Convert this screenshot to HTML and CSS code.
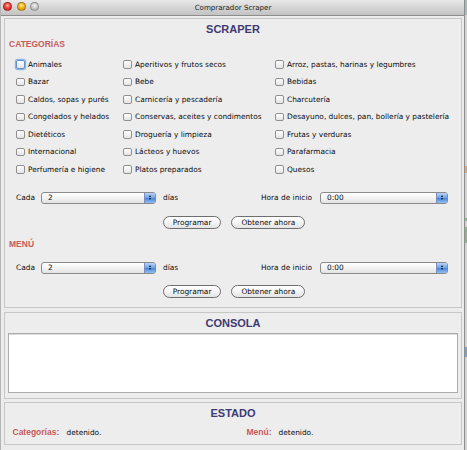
FILE: index.html
```html
<!DOCTYPE html>
<html lang="es">
<head>
<meta charset="utf-8">
<title>Comprarador Scraper</title>
<link rel="stylesheet" href="styles.css">
</head>
<body>
<div class="screen">
  <div class="window">
    <div class="titlebar">
      <div class="lights">
        <span class="light red"></span>
        <span class="light orange"></span>
        <span class="light grey"></span>
      </div>
      <div class="wtitle">Comprarador Scraper</div>
    </div>
    <div class="content">
      <section class="panel p-scraper">
        <h1 class="ptitle">SCRAPER</h1>
        <h2 class="sub">CATEGORÍAS</h2>
        <div class="cats">
          <label class="cb"><span class="box focus"></span>Animales</label>
          <label class="cb"><span class="box"></span>Aperitivos y frutos secos</label>
          <label class="cb"><span class="box"></span>Arroz, pastas, harinas y legumbres</label>
          <label class="cb"><span class="box"></span>Bazar</label>
          <label class="cb"><span class="box"></span>Bebe</label>
          <label class="cb"><span class="box"></span>Bebidas</label>
          <label class="cb"><span class="box"></span>Caldos, sopas y purés</label>
          <label class="cb"><span class="box"></span>Carnicería y pescadería</label>
          <label class="cb"><span class="box"></span>Charcutería</label>
          <label class="cb"><span class="box"></span>Congelados y helados</label>
          <label class="cb"><span class="box"></span>Conservas, aceites y condimentos</label>
          <label class="cb"><span class="box"></span>Desayuno, dulces, pan, bollería y pastelería</label>
          <label class="cb"><span class="box"></span>Dietéticos</label>
          <label class="cb"><span class="box"></span>Droguería y limpieza</label>
          <label class="cb"><span class="box"></span>Frutas y verduras</label>
          <label class="cb"><span class="box"></span>Internacional</label>
          <label class="cb"><span class="box"></span>Lácteos y huevos</label>
          <label class="cb"><span class="box"></span>Parafarmacia</label>
          <label class="cb"><span class="box"></span>Perfumería e higiene</label>
          <label class="cb"><span class="box"></span>Platos preparados</label>
          <label class="cb"><span class="box"></span>Quesos</label>
        </div>
        <div class="sched sched-cat">
          <span class="lbl-cada">Cada</span>
          <div class="select sel-days"><span class="val">2</span><span class="arrows"><i class="up"></i><i class="down"></i></span></div>
          <span class="lbl-dias">días</span>
          <span class="lbl-hora">Hora de inicio</span>
          <div class="select sel-hour"><span class="val">0:00</span><span class="arrows"><i class="up"></i><i class="down"></i></span></div>
        </div>
        <div class="btns btns-cat">
          <button class="btn">Programar</button>
          <button class="btn">Obtener ahora</button>
        </div>
        <h2 class="sub sub-menu">MENÚ</h2>
        <div class="sched sched-menu">
          <span class="lbl-cada">Cada</span>
          <div class="select sel-days"><span class="val">2</span><span class="arrows"><i class="up"></i><i class="down"></i></span></div>
          <span class="lbl-dias">días</span>
          <span class="lbl-hora">Hora de inicio</span>
          <div class="select sel-hour"><span class="val">0:00</span><span class="arrows"><i class="up"></i><i class="down"></i></span></div>
        </div>
        <div class="btns btns-menu">
          <button class="btn">Programar</button>
          <button class="btn">Obtener ahora</button>
        </div>
      </section>

      <section class="panel p-console">
        <h1 class="ptitle">CONSOLA</h1>
        <div class="console"></div>
      </section>

      <section class="panel p-state">
        <h1 class="ptitle">ESTADO</h1>
        <div class="status">
          <span class="slabel">Categorías:</span>
          <span class="sval">detenido.</span>
          <span class="slabel">Menú:</span>
          <span class="sval">detenido.</span>
        </div>
      </section>
    </div>
  </div>
  <div class="strip"></div>
</div>
</body>
</html>
```

FILE: styles.css
```css
* { box-sizing: border-box; }
html, body { margin: 0; padding: 0; }
body {
  width: 467px;
  height: 450px;
  overflow: hidden;
  background: #d9dcdc;
  font-family: "DejaVu Sans", "Liberation Sans", sans-serif;
  font-size: 7.4px;
  color: #0c0c0c;
}

.screen {
  display: flex;
  height: 450px;
}

.window {
  width: 465px;
  height: 450px;
  display: flex;
  flex-direction: column;
  background: #ececec;
  border-left: 1px solid #b4b4b4;
  border-right: 1px solid #8e8e8e;
}

.strip {
  flex: 1;
  background: linear-gradient(to bottom,
    #a9b8b8 0, #a9b8b8 15px,
    #d4d4d4 15px, #d4d4d4 166px,
    #e3a56c 166px, #e3a56c 173px,
    #d4d4d4 173px, #d4d4d4 218px,
    #8db48f 218px, #8db48f 221px,
    #d4d4d4 221px, #d4d4d4 227px,
    #8db48f 227px, #8db48f 243px,
    #d4d4d4 243px, #d4d4d4 347px,
    #7f9dcf 347px, #7f9dcf 357px,
    #d4d4d4 357px);
}

/* title bar */
.titlebar {
  position: relative;
  height: 16px;
  flex: none;
  display: flex;
  align-items: center;
  justify-content: center;
  background: linear-gradient(to bottom, #e9e9e9 0%, #d3d3d3 55%, #c2c2c2 100%);
  border-bottom: 1px solid #8d8d8d;
}
.lights {
  position: absolute;
  left: 2px;
  top: 2px;
  display: flex;
  gap: 4.5px;
}
.light {
  width: 9px;
  height: 9px;
  border-radius: 50%;
  border: 1px solid rgba(0,0,0,0.25);
}
.light.red { background: radial-gradient(circle at 50% 35%, #ffb3a8 0, #f0403a 45%, #b51616 100%); }
.light.orange { background: radial-gradient(circle at 50% 35%, #fff1a4 0, #f4b421 45%, #c2770c 100%); }
.light.grey { background: radial-gradient(circle at 50% 35%, #f2f2f2 0, #c9c9c9 50%, #a3a3a3 100%); }
.wtitle {
  font-size: 7.1px;
  color: #1a1a1a;
  padding-left: 1px;
}

/* content */
.content {
  flex: 1;
  display: flex;
  flex-direction: column;
  padding: 2px 2px 0 3px;
}

.panel {
  border: 1px solid #c6c6c6;
  background: #ededed;
  padding: 3px 3px 0;
}
.p-scraper { height: 290px; }
.p-console { height: 87px; margin-top: 4px; }
.p-state { height: 43px; margin-top: 3px; }

.ptitle {
  margin: 0;
  font-family: "Liberation Sans", Arial, sans-serif;
  font-weight: bold;
  font-size: 11px;
  line-height: 14px;
  color: #3e3a72;
  text-align: center;
}

.sub {
  margin: 3px 0 0 1px;
  font-family: "Liberation Sans", Arial, sans-serif;
  font-weight: bold;
  font-size: 8.5px;
  line-height: 10px;
  color: #c95b5c;
}
.sub-menu { margin-top: 10px; }

/* checkboxes */
.cats {
  margin-top: 6.5px;
  padding-left: 8px;
  display: grid;
  grid-template-columns: 107px 152px 1fr;
  grid-auto-rows: 17.5px;
}
.cb {
  display: flex;
  align-items: center;
  white-space: nowrap;
}
.box {
  flex: none;
  width: 8.5px;
  height: 8.5px;
  margin-right: 3.5px;
  border: 1px solid #8f8f8f;
  border-radius: 2px;
  background: linear-gradient(to bottom, #ffffff, #e4e4e4);
}
.box.focus {
  border-color: #5f8fd0;
  box-shadow: 0 0 0 1.2px #8fb4e6;
}

/* schedule rows */
.sched {
  display: flex;
  align-items: center;
  height: 14px;
  padding-left: 8px;
}
.sched-cat { margin-top: 12.5px; }
.sched-menu { margin-top: 12px; }
.lbl-cada { width: 25px; }
.lbl-dias { width: 98px; margin-left: 7px; }
.lbl-hora { width: 59px; }

.select {
  position: relative;
  height: 12px;
  display: flex;
  align-items: center;
  border: 1px solid #8a8a8a;
  border-radius: 3px;
  background: linear-gradient(to bottom, #ffffff 0%, #f3f3f3 50%, #e2e2e2 100%);
  overflow: hidden;
}
.sel-days { width: 115px; }
.sel-hour { width: 128px; }
.select .val { flex: 1; padding-left: 6px; }
.arrows {
  width: 11px;
  align-self: stretch;
  display: flex;
  flex-direction: column;
  align-items: center;
  justify-content: center;
  gap: 1px;
  border-left: 1px solid #7b8fc0;
  background: linear-gradient(to bottom, #b7d3f7 0%, #6fa1e6 50%, #4d86dc 55%, #8fc0f2 100%);
}
.arrows i {
  width: 0;
  height: 0;
  border-left: 1.7px solid transparent;
  border-right: 1.7px solid transparent;
}
.arrows .up { border-bottom: 2px solid #111; }
.arrows .down { border-top: 2px solid #111; }

/* buttons */
.btns {
  display: flex;
  justify-content: center;
  gap: 10px;
  padding-left: 2px;
}
.btns-cat { margin-top: 11px; }
.btns-menu { margin-top: 10px; }
.btn {
  height: 13px;
  padding: 0 9px;
  font-family: "DejaVu Sans", sans-serif;
  font-size: 7.4px;
  line-height: 11px;
  color: #0c0c0c;
  border: 1px solid #6e6e6e;
  border-radius: 7px;
  background: linear-gradient(to bottom, #ffffff 0%, #f4f4f4 50%, #e3e3e3 100%);
}

/* console */
.console {
  margin: 3px 0 0;
  height: 60px;
  background: #ffffff;
  border: 1px solid #acacac;
  box-shadow: inset 0 1px 0 #dcdcdc;
}

/* status */
.status {
  margin-top: 7px;
  height: 10px;
  display: grid;
  grid-template-columns: 54px 180px 32px 1fr;
  align-items: center;
  padding-left: 4.5px;
}
.slabel {
  font-family: "Liberation Sans", Arial, sans-serif;
  font-weight: bold;
  font-size: 8.5px;
  color: #c95b5c;
}
.sval { font-size: 7.4px; }
```
